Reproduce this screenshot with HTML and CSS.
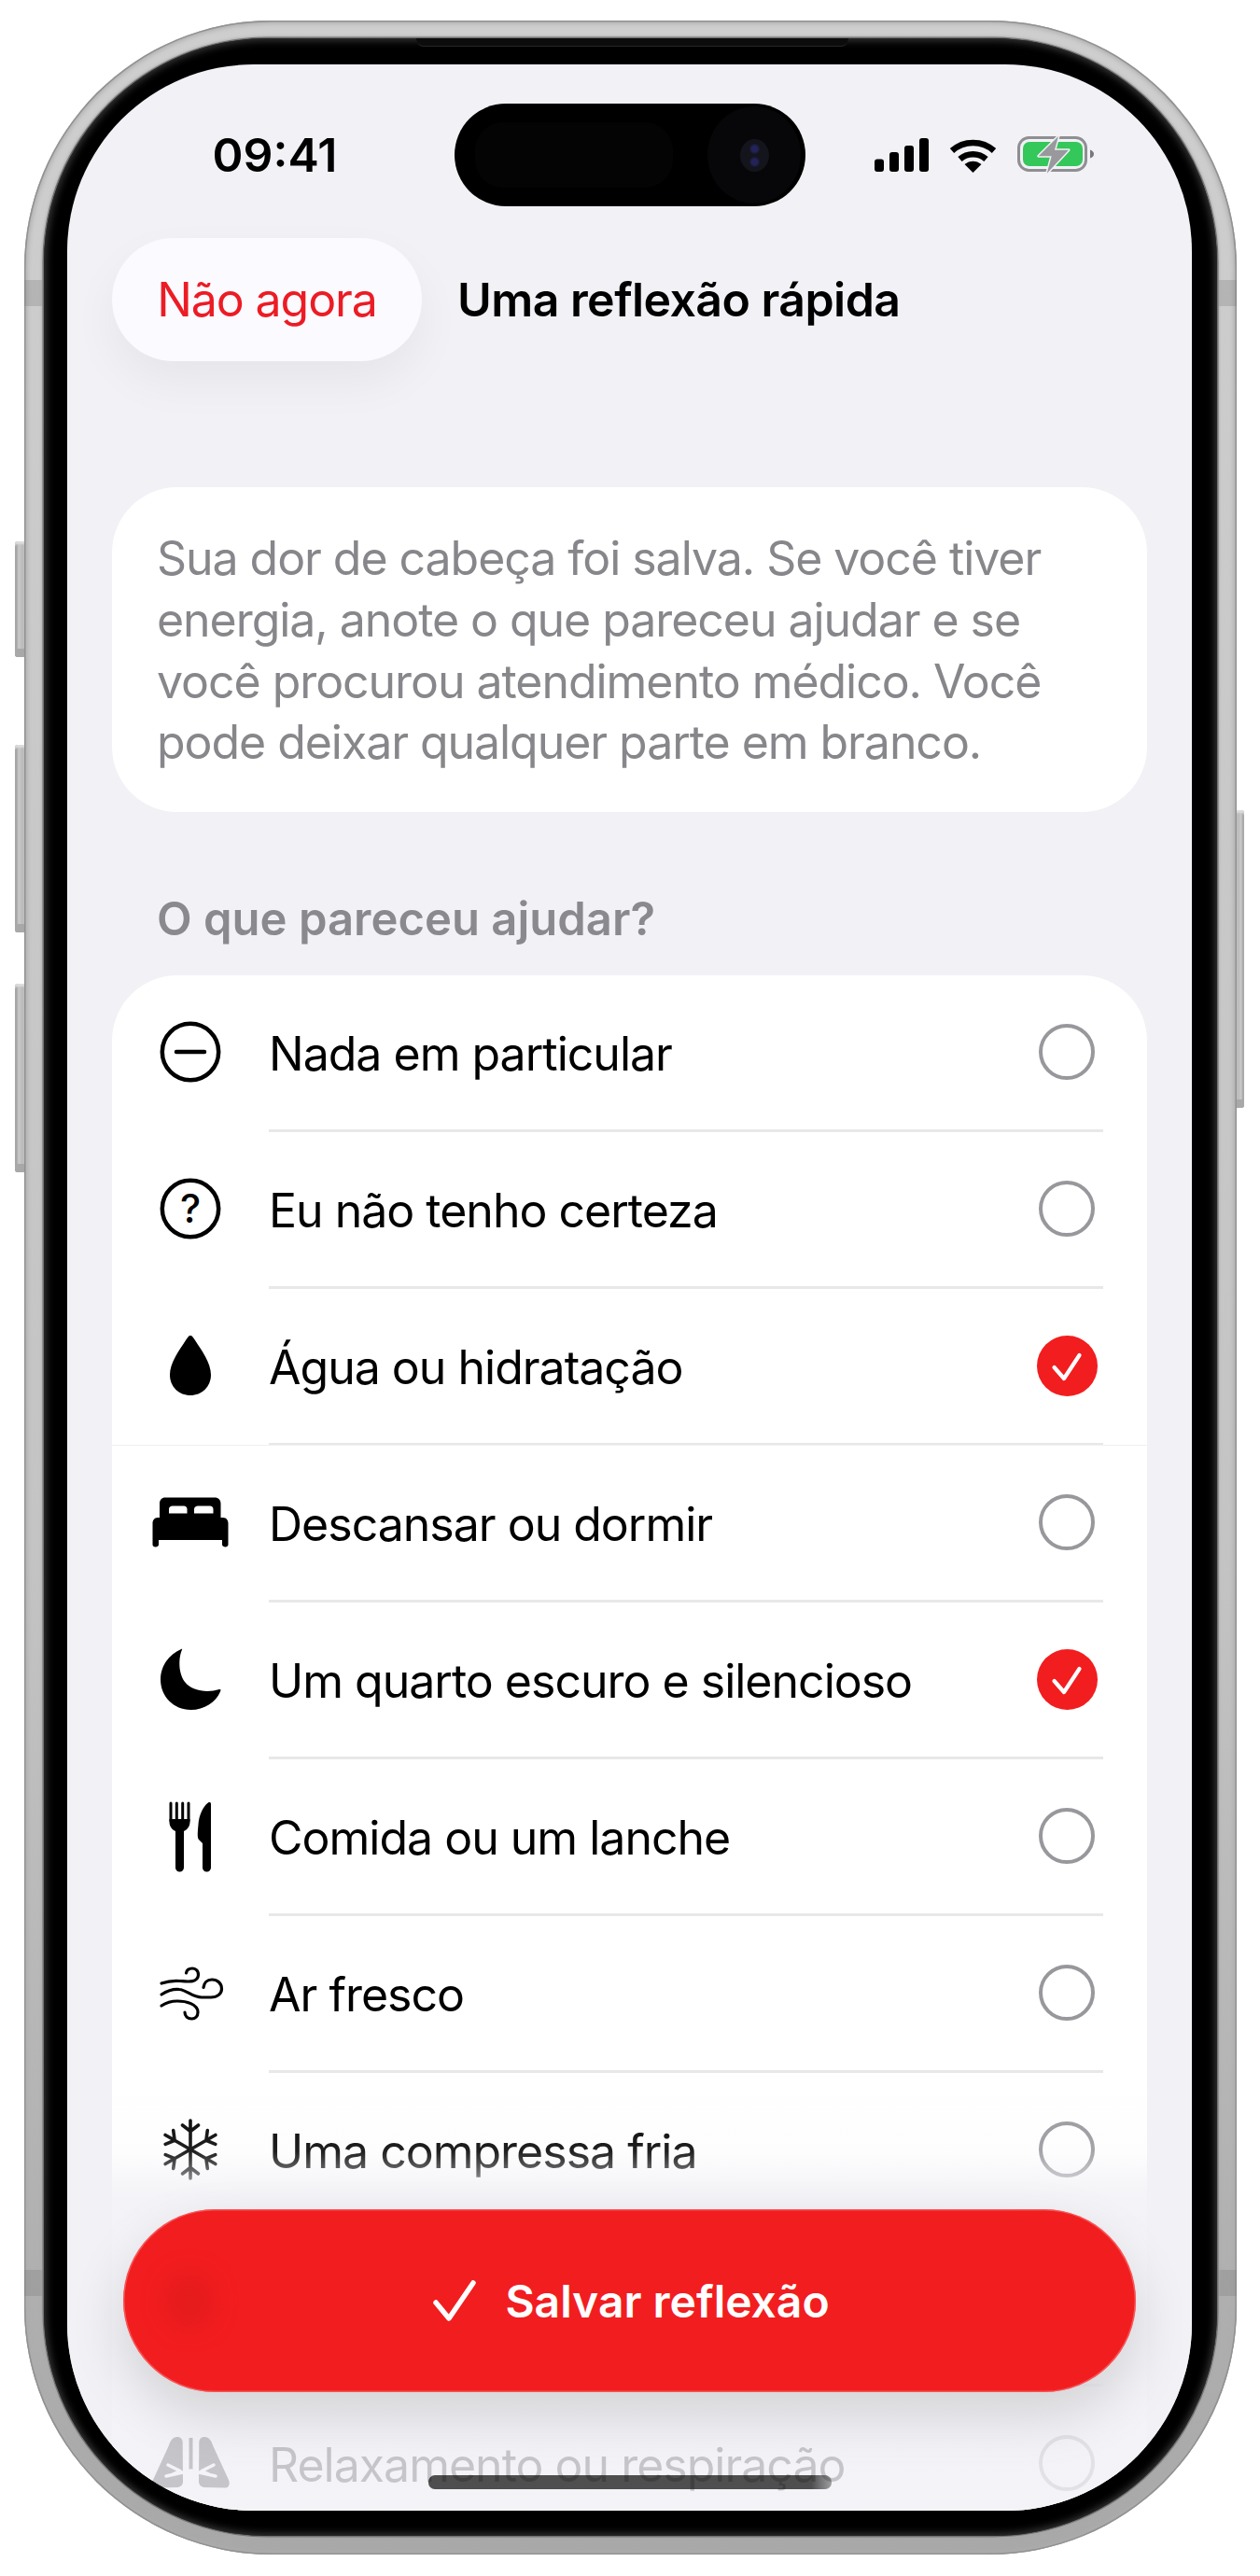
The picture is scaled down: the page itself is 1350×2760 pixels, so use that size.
FILE: index.html
```html
<!DOCTYPE html>
<html lang="pt-BR">

<head>
  <meta charset="UTF-8">
  <meta name="viewport" content="width=device-width, initial-scale=1.0">
  <title>Uma reflexão rápida</title>
  <link rel="stylesheet" href="styles.css">
</head>

<body>
  <div class="phone">
    <span class="side-btn side-btn-mute"></span>
    <span class="side-btn side-btn-up"></span>
    <span class="side-btn side-btn-down"></span>
    <span class="side-btn side-btn-power"></span>
    <span class="antenna antenna-tl"></span>
    <span class="antenna antenna-tr"></span>
    <span class="antenna antenna-bl"></span>
    <span class="antenna antenna-br"></span>

    <div class="bezel">
      <span class="bezel-lip"></span>
      <div class="screen">

        <div class="status-bar">
          <div class="status-time">09:41</div>
          <div class="island">
            <span class="island-sensor"></span>
            <span class="island-ring"><span class="island-lens"></span></span>
          </div>
          <div class="status-icons">
            <svg width="58" height="36" viewBox="0 0 58 36">
              <rect x="0" y="22.5" width="10" height="13.5" rx="3" />
              <rect x="16" y="15" width="10" height="21" rx="3" />
              <rect x="32" y="8" width="10" height="28" rx="3" />
              <rect x="48" y="0" width="10" height="36" rx="3" />
            </svg>
            <svg width="51" height="37" viewBox="0 0 51 37">
              <path d="M3 13.5C15.5 2 35.5 2 48 13.5" fill="none" stroke="#000" stroke-width="6.5" />
              <path d="M11.5 22.5C19.5 15.5 31.5 15.5 39.5 22.5" fill="none" stroke="#000" stroke-width="6.5" />
              <path d="M25.5 37L16.5 28C22 23.5 29 23.5 34.5 28Z" />
            </svg>
            <svg class="battery" width="82" height="40" viewBox="0 0 82 40">
              <rect x="1.5" y="1.5" width="72" height="35" rx="11" fill="none" stroke="#8e8e93" stroke-width="3" />
              <rect x="6" y="6" width="64" height="26" rx="7" fill="#34c759" />
              <path d="M78 14.5C80.5 15.5 82 17 82 19C82 21 80.5 22.5 78 23.5Z" fill="#77777c" />
              <path d="M44 0L22.7 21.3H36.7L31.7 39.7L55 14.7H40Z" fill="#98989d" stroke="#f1f1f6" stroke-width="3"
                stroke-linejoin="round" paint-order="stroke" />
            </svg>
          </div>
        </div>

        <header class="top-bar">
          <button class="cancel-btn">Não agora</button>
          <h1 class="page-title">Uma reflexão rápida</h1>
        </header>

        <p class="intro-card">Sua dor de cabeça foi salva. Se você tiver energia, anote o que pareceu ajudar e se você
          procurou atendimento médico. Você pode deixar qualquer parte em branco.</p>

        <h2 class="section-title">O que pareceu ajudar?</h2>

        <ul class="option-list">
          <li class="option">
            <span class="option-icon">
              <svg width="100" height="100" viewBox="0 0 100 100" fill="none" stroke="#000" stroke-width="4.5">
                <circle cx="50" cy="50" r="30.2" />
                <path d="M35 50H65" stroke-linecap="round" />
              </svg>
            </span>
            <div class="option-body">
              <span class="option-label">Nada em particular</span>
              <span class="radio"></span>
            </div>
          </li>
          <li class="option">
            <span class="option-icon">
              <svg width="100" height="100" viewBox="0 0 100 100" fill="none" stroke="#000" stroke-width="4.5">
                <circle cx="50" cy="50" r="30.2" />
                <text x="50" y="65" text-anchor="middle" class="icon-mark">?</text>
              </svg>
            </span>
            <div class="option-body">
              <span class="option-label">Eu não tenho certeza</span>
              <span class="radio"></span>
            </div>
          </li>
          <li class="option option-seam">
            <span class="option-icon">
              <svg width="100" height="100" viewBox="0 0 100 100">
                <path d="M50 18C52 18 53 20 55 23C62 34 72 47 72 60C72 73 62 82 50 82C38 82 28 73 28 60C28 47 38 34 45 23C47 20 48 18 50 18Z" />
              </svg>
            </span>
            <div class="option-body">
              <span class="option-label">Água ou hidratação</span>
              <span class="radio radio-checked">
                <svg width="65" height="65" viewBox="0 0 65 65" fill="none" stroke="#fff" stroke-width="4.2"
                  stroke-linecap="round" stroke-linejoin="round">
                  <path d="M18.5 34L29 46L45.5 21" />
                </svg>
              </span>
            </div>
          </li>
          <li class="option">
            <span class="option-icon">
              <svg width="100" height="100" viewBox="0 0 100 100">
                <path fill-rule="evenodd"
                  d="M23 23.5H76C80 23.5 82.5 26 82.5 30V45H85C88.5 45 90.5 48 90.5 51V74C90.5 75.5 89 76.5 87.5 76.5C86 76.5 84 75.5 84 74V69H16V74C16 75.5 14.5 76.5 12.5 76.5C11 76.5 9.5 75.5 9.5 74V51C9.5 48 11.5 45 15 45H17V30C17 26 19.5 23.5 23 23.5ZM31 32.5C28.5 32.5 27 34 27 36V40.5H46.5V36C46.5 34 45 32.5 43 32.5ZM58 32.5C56 32.5 54 34 54 36V40.5H74.5V36C74.5 34 73 32.5 71 32.5Z" />
              </svg>
            </span>
            <div class="option-body">
              <span class="option-label">Descansar ou dormir</span>
              <span class="radio"></span>
            </div>
          </li>
          <li class="option">
            <span class="option-icon">
              <svg width="100" height="100" viewBox="0 0 100 100">
                <path d="M41 18.5C37 28 37 44 44 53C52 63 68 65 81 61C83 60.5 82.5 62.5 82 63.5C77 75 65 83 50.5 83C32 83 18 68.5 18 50.5C18 36 27 23.5 40 18C41 17.5 41.5 18 41 18.5Z" />
              </svg>
            </span>
            <div class="option-body">
              <span class="option-label">Um quarto escuro e silencioso</span>
              <span class="radio radio-checked">
                <svg width="65" height="65" viewBox="0 0 65 65" fill="none" stroke="#fff" stroke-width="4.2"
                  stroke-linecap="round" stroke-linejoin="round">
                  <path d="M18.5 34L29 46L45.5 21" />
                </svg>
              </span>
            </div>
          </li>
          <li class="option">
            <span class="option-icon">
              <svg width="100" height="100" viewBox="0 0 100 100">
                <path d="M29 15V34M35.3 15V34M41.7 15V34M48 15V34" stroke="#000" stroke-width="3" stroke-linecap="round" />
                <path d="M27.5 32H49.5V35C49.5 40 46.5 43.5 43 45V84A4.5 4.5 0 0 1 34 84V45C30.5 43.5 27.5 40 27.5 35Z" />
                <path d="M72 16V84A4.5 4.5 0 0 1 63 84V58L59 54C57 52 58 44 58.5 38C59 28 64 18 69 14.5C70.5 13.5 72 14 72 16Z" />
              </svg>
            </span>
            <div class="option-body">
              <span class="option-label">Comida ou um lanche</span>
              <span class="radio"></span>
            </div>
          </li>
          <li class="option">
            <span class="option-icon">
              <svg width="100" height="100" viewBox="0 0 100 100" fill="none" stroke="#000" stroke-width="3.2" stroke-linecap="round">
                <path d="M19 40C26 37.5 33 37 39 37.5C46 38 58 40 58.5 31C58.7 26 55 24 52 24C48.5 24 46 26 45.5 29" />
                <path d="M19 52C26 47.5 33 46 38 46.5C46 47 52 55 62 55H72C79 55 83.5 51 83.5 46C83.5 40 79 36 73 36C68 36 64.5 39.5 64 44.5" />
                <path d="M19 64C25 60 31 59 36 59C45 59 58 62 58 71C58 75.5 55 78 51.5 78C47 78 44 75 44 71" />
              </svg>
            </span>
            <div class="option-body">
              <span class="option-label">Ar fresco</span>
              <span class="radio"></span>
            </div>
          </li>
          <li class="option">
            <span class="option-icon">
              <svg width="100" height="100" viewBox="0 0 100 100" fill="none" stroke="#000" stroke-width="3.6" stroke-linecap="round" stroke-linejoin="round">
                <path d="M50 50V19M41.5 24L50 30.5L58.5 24" />
                <path d="M50 50V19M41.5 24L50 30.5L58.5 24" transform="rotate(60 50 50)" />
                <path d="M50 50V19M41.5 24L50 30.5L58.5 24" transform="rotate(120 50 50)" />
                <path d="M50 50V19M41.5 24L50 30.5L58.5 24" transform="rotate(180 50 50)" />
                <path d="M50 50V19M41.5 24L50 30.5L58.5 24" transform="rotate(240 50 50)" />
                <path d="M50 50V19M41.5 24L50 30.5L58.5 24" transform="rotate(300 50 50)" />
              </svg>
            </span>
            <div class="option-body">
              <span class="option-label">Uma compressa fria</span>
              <span class="radio"></span>
            </div>
          </li>
          <!-- this row sits fully behind the save button -->
          <li class="option">
            <span class="option-icon"></span>
            <div class="option-body">
              <span class="option-label"></span>
              <span class="radio"></span>
            </div>
          </li>
          <li class="option">
            <span class="option-icon">
              <svg width="100" height="100" viewBox="0 0 100 100">
                <path d="M41.7 28C41.7 24 39 22 36 22C31 22 28.5 26 27 31L10 68C8.5 72 9.5 76 13 76.5L36 76C40 75.5 42 73 42 70Z" />
                <path d="M41.7 28C41.7 24 39 22 36 22C31 22 28.5 26 27 31L10 68C8.5 72 9.5 76 13 76.5L36 76C40 75.5 42 73 42 70Z" transform="matrix(-1 0 0 1 101 0)" />
                <rect x="48.5" y="23" width="4" height="34" />
                <path d="M50.5 58L24 64M26 52L39 58.5L31 62M50.5 58L77 64M75 52L62 58.5L70 62" fill="none" stroke="#fff" stroke-width="3.5" stroke-linecap="round" stroke-linejoin="round" />
              </svg>
            </span>
            <div class="option-body">
              <span class="option-label">Relaxamento ou respiração</span>
              <span class="radio"></span>
            </div>
          </li>
        </ul>

        <div class="list-fade"></div>

        <button class="save-btn">
          <span class="save-smudge"></span>
          <svg width="46" height="44" viewBox="0 0 46 44" fill="none" stroke="#fff" stroke-width="5.5" stroke-linecap="round" stroke-linejoin="round">
            <path d="M3 24L17 41L43 3" />
          </svg>
          Salvar reflexão
        </button>

        <span class="home-indicator"></span>
      </div>
    </div>
  </div>
</body>

</html>
```

FILE: styles.css
```css
/* page */
body {
  margin: 0;
  background-color: #fff;
  font-family: Inter, "Liberation Sans", sans-serif;
  color: #000;
}

/* phone frame */
.phone {
  position: relative;
  box-sizing: border-box;
  width: 1299px;
  height: 2715px;
  margin: 22px 0 0 26px;
  padding: 19px 21px 20px 21px;
  border-radius: 265px;
  background: linear-gradient(#cecece, #c4c4c4 60%, #a8a8a8);
  box-shadow: inset 0 0 0 1.5px #929292, inset 0 0 5px 3px #adadad;
}

.bezel {
  position: relative;
  box-sizing: border-box;
  height: 100%;
  padding: 28px 27px 27px 25px;
  border-radius: 240px;
  background-color: #000;
  box-shadow: 0 0 0 1.5px #727272, 0 0 3px 2px #a6a6a6, inset 0 0 8px 2px #3c3c3c;
}

.bezel-lip {
  position: absolute;
  top: 0;
  left: 399px;
  width: 463px;
  height: 8px;
  border-radius: 0 0 8px 8px;
  background-color: #0c0c0c;
  border-bottom: 1px solid #262626;
}

.side-btn {
  position: absolute;
  left: -10px;
  width: 10px;
  border-radius: 3px 0 0 3px;
  background: linear-gradient(to right, #8c8c8c, #c9c9c9 40%, #b4b4b4);
  box-shadow: inset 0 -9px 0 #a8a8a8, inset 0 3px 2px #ddd;
}

.side-btn-mute {
  top: 558px;
  height: 124px;
}

.side-btn-up {
  top: 776px;
  height: 201px;
}

.side-btn-down {
  top: 1032px;
  height: 202px;
}

.side-btn-power {
  top: 846px;
  left: 1299px;
  width: 8px;
  height: 319px;
  border-radius: 0 3px 3px 0;
  background: linear-gradient(to left, #8c8c8c, #c9c9c9 40%, #b4b4b4);
}

.antenna {
  position: absolute;
  width: 21px;
  height: 28px;
  background-color: rgba(120, 120, 120, 0.28);
}

.antenna-tl {
  top: 278px;
  left: 0;
}

.antenna-tr {
  top: 278px;
  right: 0;
}

.antenna-bl {
  top: 2410px;
  left: 0;
}

.antenna-br {
  top: 2410px;
  right: 0;
}

/* screen */
.screen {
  position: relative;
  height: 100%;
  overflow: hidden;
  border-radius: 200px;
  background-color: #f1f1f6;
}

/* status bar */
.status-bar {
  display: flex;
  align-items: center;
  padding-top: 42px;
}

.status-time {
  box-sizing: border-box;
  width: 415px;
  padding-left: 30px;
  font-size: 50px;
  font-weight: 600;
  text-align: center;
}

.island {
  display: flex;
  align-items: center;
  justify-content: space-between;
  box-sizing: border-box;
  width: 376px;
  height: 110px;
  padding: 0 5px 0 22px;
  border-radius: 55px;
  background-color: #000;
}

.island-sensor {
  width: 212px;
  height: 70px;
  border-radius: 30px;
  background-color: #040404;
}

.island-ring {
  display: flex;
  align-items: center;
  justify-content: center;
  width: 100px;
  height: 104px;
  border-radius: 50%;
  background-color: #070709;
}

.island-lens {
  width: 31px;
  height: 35px;
  border-radius: 50%;
  background: radial-gradient(circle at 50% 30%, #23235a 0 3px, transparent 6px),
    radial-gradient(circle at 50% 70%, #23235a 0 3px, transparent 6px),
    #14141c;
}

.status-icons {
  display: flex;
  align-items: center;
  gap: 22px;
  padding-left: 74px;
}

.battery {
  overflow: visible;
}

/* header */
.top-bar {
  display: flex;
  align-items: center;
  gap: 38px;
  margin-top: 34px;
  padding: 0 48px;
}

.cancel-btn {
  width: 332px;
  height: 132px;
  padding: 0;
  border: 0;
  border-radius: 66px;
  background-color: #fbfaff;
  box-shadow: 0 22px 50px rgba(0, 0, 0, 0.05);
  font-family: inherit;
  font-size: 50px;
  letter-spacing: -1.1px;
  color: #ec1c24;
}

.page-title {
  margin: 0;
  font-size: 50px;
  font-weight: 600;
  letter-spacing: -0.55px;
}

/* intro text */
.intro-card {
  margin: 135px 48px 0 48px;
  padding: 44px 60px 40.8px 48px;
  border-radius: 70px;
  background-color: #fff;
  font-size: 50px;
  line-height: 65.8px;
  letter-spacing: -1.05px;
  color: #87878b;
}

.section-title {
  margin: 85px 48px 30px 48px;
  padding-left: 48px;
  font-size: 49px;
  font-weight: 600;
  line-height: 60px;
  color: #8a8a8e;
}

/* options */
.option-list {
  margin: 0 48px;
  padding: 0;
  list-style: none;
  border-radius: 70px 70px 0 0;
  background-color: #fff;
}

.option {
  position: relative;
  display: flex;
  height: 168px;
}

.option-seam::after {
  content: "";
  position: absolute;
  left: 0;
  right: 0;
  bottom: 0;
  height: 1px;
  background-color: #f1f1f1;
}

.option-icon {
  display: flex;
  align-items: center;
  justify-content: center;
  flex: none;
  width: 168px;
  height: 165px;
}

.option-icon svg {
  flex: none;
}

.icon-mark {
  font-family: Inter, sans-serif;
  font-size: 42px;
  font-weight: 500;
  fill: #000;
  stroke: none;
}

.option-body {
  display: flex;
  flex: 1;
  align-items: center;
  justify-content: space-between;
  margin-right: 47px;
  padding-right: 6px;
  border-bottom: 3px solid #e8e8e9;
}

.option-label {
  padding-top: 3px;
  font-size: 50px;
  letter-spacing: -1px;
}

.radio {
  box-sizing: border-box;
  width: 60px;
  height: 60px;
  margin-right: 3px;
  border: 4px solid #98989c;
  border-radius: 50%;
}

.radio-checked {
  display: block;
  width: 65px;
  height: 65px;
  margin-right: 0;
  border: 0;
  background-color: #f21d1f;
}

/* fade of the list under the save button */
.list-fade {
  position: absolute;
  left: 0;
  right: 0;
  top: 2161px;
  bottom: 0;
  background: linear-gradient(rgba(241, 241, 246, 0),
      rgba(241, 241, 246, 0.13) 75px,
      rgba(241, 241, 246, 0.7) 115px,
      rgba(241, 241, 246, 0.82) 137px);
}

.save-btn {
  position: absolute;
  top: 2298px;
  left: 60px;
  display: flex;
  align-items: center;
  justify-content: center;
  gap: 31px;
  width: 1085px;
  height: 196px;
  padding: 0 0 0 4px;
  border: 0;
  border-radius: 98px;
  background-color: #f21d1f;
  box-shadow: inset 0 0 0 1.5px rgba(255, 130, 130, 0.55), 0 24px 60px rgba(0, 0, 0, 0.14);
  font-family: inherit;
  font-size: 48px;
  font-weight: 600;
  color: #fff;
}

.save-smudge {
  position: absolute;
  top: 70px;
  left: 46px;
  width: 50px;
  height: 56px;
  border-radius: 50%;
  background-color: #e41b1c;
  filter: blur(12px);
}

.home-indicator {
  position: absolute;
  top: 2583px;
  left: 387px;
  width: 432px;
  height: 15px;
  border-radius: 7px;
  background: linear-gradient(to right, rgba(0, 0, 0, 0.68) 95%, rgba(0, 0, 0, 0.35));
}
```
